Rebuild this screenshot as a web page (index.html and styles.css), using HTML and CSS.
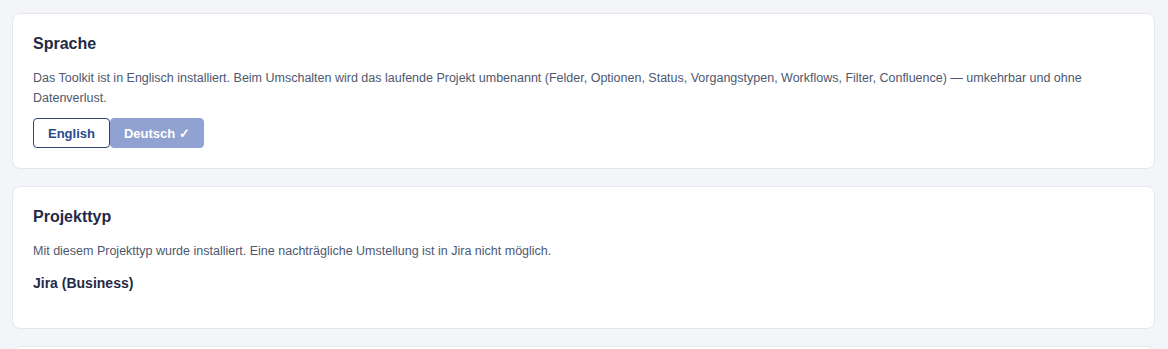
FILE: index.html
```html
<!DOCTYPE html>
<html lang="de">
<head>
    <meta charset="UTF-8">
    <meta name="viewport" content="width=device-width, initial-scale=1.0">
    <title>Einstellungen</title>
    <link rel="stylesheet" href="styles.css">
</head>
<body>
    <main class="settings">
        <section class="card">
            <h3 class="card-title">Sprache</h3>
            <p class="card-text">Das Toolkit ist in Englisch installiert. Beim Umschalten wird das laufende Projekt umbenannt (Felder, Optionen, Status, Vorgangstypen, Workflows, Filter, Confluence) — umkehrbar und ohne Datenverlust.</p>
            <div class="lang-switch">
                <button class="lang-btn">English</button>
                <button class="lang-btn active">Deutsch ✓</button>
            </div>
        </section>

        <section class="card">
            <h3 class="card-title">Projekttyp</h3>
            <p class="card-text">Mit diesem Projekttyp wurde installiert. Eine nachträgliche Umstellung ist in Jira nicht möglich.</p>
            <p class="card-value">Jira (Business)</p>
        </section>

        <section class="card"></section>
    </main>
</body>
</html>
```

FILE: styles.css
```css
*,
*:before,
*:after{
    box-sizing: border-box;
}

body{
    margin: 0;
    padding: 0;
    background: #f4f5f8;
    font-family: "Liberation Sans", Arial, sans-serif;
    color: #1f2b46;
}

.settings{
    padding: 13px 13px 0 12px;
    display: flex;
    flex-direction: column;
    gap: 17px;
}

.card{
    background: #fff;
    border: 1px solid #e5e7ec;
    border-radius: 8px;
    padding: 20px;
    min-height: 100px;
}

.card-title{
    margin: 0 0 14px;
    font-size: 16px;
    line-height: 20px;
    font-weight: 700;
    color: #1f2b46;
}

.card-text{
    margin: 0;
    font-size: 12.5px;
    line-height: 20px;
    color: #4e5870;
}

.card-value{
    margin: 12px 0 15px;
    font-size: 14px;
    line-height: 20px;
    font-weight: 700;
    color: #1f2b46;
}

.lang-switch{
    display: flex;
    margin-top: 10px;
}

.lang-btn{
    height: 30px;
    padding: 0 14px;
    font-family: inherit;
    font-size: 13px;
    font-weight: 700;
    color: #2a4a8e;
    background: #fff;
    border: 1px solid #2e4676;
    border-radius: 4px;
    cursor: pointer;
}

.lang-btn.active{
    padding: 0 13px;
    color: #fff;
    background: #8fa2d1;
    border-color: #8fa2d1;
}
```
